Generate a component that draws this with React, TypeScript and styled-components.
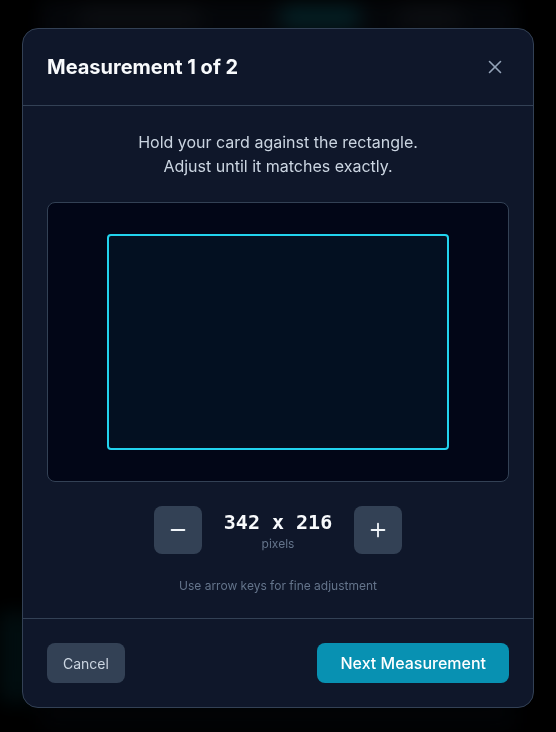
import React from "react";
import styled, { createGlobalStyle } from "styled-components";
import { X, Minus, Plus } from "lucide-react";

const Global = createGlobalStyle`
  html, body { margin: 0; padding: 0; background: #000; }
  body { font-family: Inter, "Noto Sans", sans-serif; -webkit-font-smoothing: antialiased; }
  * { box-sizing: border-box; }
`;

const Page = styled.div`
  width: 556px;
  height: 732px;
  overflow: hidden;
  background: #000;
  filter: blur(10px);
  display: flex;
  flex-direction: column;
  padding: 0 40px;
`;

const TopBar = styled.div`
  display: flex;
  padding: 6px 40px 0;
  height: 40px;
  background: #0b1018;
`;

const Pill = styled.div<{ $w: number; $c: string; $gap: number }>`
  width: ${(p) => p.$w}px;
  margin-right: ${(p) => p.$gap}px;
  height: 24px;
  border-radius: 8px;
  background: ${(p) => p.$c};
`;

const PageBody = styled.div`
  flex: 1;
  display: flex;
  align-items: flex-end;
  background: #070b12;
`;

const Glow = styled.div`
  width: 40px;
  height: 90px;
  margin: 0 0 30px -40px;
  background: #05262c;
`;

const Overlay = styled.div`
  position: fixed;
  inset: 0;
  background: rgba(0, 0, 0, 0.55);
  display: flex;
  justify-content: center;
  align-items: flex-start;
  padding-top: 28px;
`;

const Modal = styled.div`
  width: 512px;
  background: #0f172a;
  border: 1px solid #334155;
  border-radius: 16px;
  display: flex;
  flex-direction: column;
  box-shadow: 0 20px 50px rgba(0, 0, 0, 0.5);
`;

const Header = styled.div`
  display: flex;
  align-items: center;
  justify-content: space-between;
  padding: 24px;
  border-bottom: 1px solid #334155;
`;

const Title = styled.h2`
  margin: 0;
  font-size: 20px;
  line-height: 28px;
  font-weight: 700;
  color: #f8fafc;
`;

const CloseButton = styled.button`
  background: none;
  border: none;
  padding: 0;
  margin-right: 3px;
  color: #94a3b8;
  display: flex;
  cursor: pointer;
`;

const Body = styled.div`
  padding: 24px;
  display: flex;
  flex-direction: column;
  align-items: center;
`;

const Instructions = styled.p`
  margin: 0 0 24px;
  text-align: center;
  font-size: 16px;
  line-height: 24px;
  color: #cbd5e1;
`;

const MeasureArea = styled.div`
  width: 100%;
  height: 280px;
  background: #020617;
  border: 1px solid #334155;
  border-radius: 8px;
  display: flex;
  align-items: center;
  justify-content: center;
`;

const CardRect = styled.div`
  border: 2px solid #22d3ee;
  border-radius: 4px;
  background: rgba(34, 211, 238, 0.05);
`;

const Controls = styled.div`
  margin-top: 24px;
  display: flex;
  align-items: center;
  gap: 16px;
`;

const StepButton = styled.button`
  width: 48px;
  height: 48px;
  border: none;
  border-radius: 8px;
  background: #334155;
  color: #f1f5f9;
  display: flex;
  align-items: center;
  justify-content: center;
  cursor: pointer;
`;

const ValueBlock = styled.div`
  min-width: 120px;
  display: flex;
  flex-direction: column;
  align-items: center;
`;

const Value = styled.div`
  font-family: "DejaVu Sans Mono", "Liberation Mono", monospace;
  font-weight: 700;
  font-size: 20px;
  line-height: 28px;
  color: #f8fafc;
`;

const Unit = styled.div`
  font-size: 12px;
  line-height: 16px;
  color: #64748b;
`;

const Hint = styled.p`
  margin: 24px 0 0;
  font-size: 12px;
  line-height: 16px;
  color: #64748b;
`;

const Footer = styled.div`
  display: flex;
  justify-content: space-between;
  align-items: center;
  padding: 24px;
  border-top: 1px solid #334155;
`;

const Button = styled.button<{ $primary?: boolean }>`
  height: 40px;
  border: none;
  border-radius: 8px;
  font-family: Inter, "Noto Sans", sans-serif;
  cursor: pointer;
  padding: ${(p) => (p.$primary ? "0 23px" : "0 16px")};
  font-size: ${(p) => (p.$primary ? "16px" : "14px")};
  font-weight: ${(p) => (p.$primary ? 500 : 400)};
  background: ${(p) => (p.$primary ? "#0891b2" : "#334155")};
  color: ${(p) => (p.$primary ? "#ffffff" : "#cbd5e1")};
`;

export default function App() {
  const w = 342;
  const h = 216;
  return (
    <>
      <Global />
      <Page>
        <TopBar>
          <Pill $w={120} $gap={80} $c="#1b2028" />
          <Pill $w={80} $gap={40} $c="#0a4a55" />
          <Pill $w={60} $gap={0} $c="#1b2028" />
        </TopBar>
        <PageBody>
          <Glow />
        </PageBody>
      </Page>
      <Overlay>
        <Modal>
          <Header>
            <Title>Measurement 1 of 2</Title>
            <CloseButton aria-label="Close">
              <X size={22} strokeWidth={1.75} />
            </CloseButton>
          </Header>
          <Body>
            <Instructions>
              Hold your card against the rectangle.
              <br />
              Adjust until it matches exactly.
            </Instructions>
            <MeasureArea>
              <CardRect style={{ width: w, height: h }} />
            </MeasureArea>
            <Controls>
              <StepButton aria-label="Decrease">
                <Minus size={22} strokeWidth={2} />
              </StepButton>
              <ValueBlock>
                <Value>
                  {w} x {h}
                </Value>
                <Unit>pixels</Unit>
              </ValueBlock>
              <StepButton aria-label="Increase">
                <Plus size={22} strokeWidth={2} />
              </StepButton>
            </Controls>
            <Hint>Use arrow keys for fine adjustment</Hint>
          </Body>
          <Footer>
            <Button>Cancel</Button>
            <Button $primary>Next Measurement</Button>
          </Footer>
        </Modal>
      </Overlay>
    </>
  );
}
